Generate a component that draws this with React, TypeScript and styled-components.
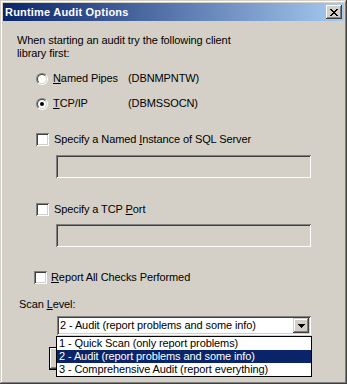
import React from "react";
import styled, { createGlobalStyle } from "styled-components";

const Global = createGlobalStyle`
  html, body { margin: 0; padding: 0; background: #D4D0C8; }
  * { box-sizing: border-box; }
`;

const FONT = `"Liberation Sans", Arial, sans-serif`;

const Window = styled.div`
  position: relative;
  width: 347px;
  height: 384px;
  background: #d4d0c8;
  padding: 3px;
  font-family: ${FONT};
  font-size: 11px;
  letter-spacing: -0.1px;
  color: #000;
  box-shadow: inset -1px -1px #404040, inset 1px 1px #d4d0c8,
    inset -2px -2px #808080, inset 2px 2px #ffffff;
  display: flex;
  flex-direction: column;
`;

const TitleBar = styled.div`
  height: 18px;
  background: linear-gradient(to right, #0a246a, #a6caf0);
  display: flex;
  align-items: center;
  justify-content: space-between;
  padding: 0 2px 0 2px;
`;

const TitleText = styled.span`
  color: #fff;
  font-weight: bold;
  font-size: 11px;
  letter-spacing: 0.2px;
  line-height: 13px;
`;

const CloseButton = styled.div`
  width: 16px;
  height: 14px;
  background: #d4d0c8;
  box-shadow: inset -1px -1px #404040, inset 1px 1px #ffffff,
    inset -2px -2px #808080, inset 2px 2px #d4d0c8;
  display: flex;
  align-items: center;
  justify-content: center;
`;

const Body = styled.div`
  position: relative;
  flex: 1;
  display: flex;
  flex-direction: column;
  padding: 13px 0 0 14px;
`;

const Text = styled.div`
  line-height: 13px;
  white-space: nowrap;
`;

const Row = styled.div<{ $top: number; $left: number }>`
  display: flex;
  align-items: center;
  height: 13px;
  line-height: 13px;
  margin-top: ${(p) => p.$top}px;
  margin-left: ${(p) => p.$left}px;
  white-space: nowrap;
`;

const RadioOuter = styled.span`
  width: 12px;
  height: 12px;
  border-radius: 50%;
  border: 1px solid;
  border-color: #808080 #ffffff #ffffff #808080;
  display: inline-flex;
  flex: none;
`;

const RadioInner = styled.span<{ $on?: boolean }>`
  width: 10px;
  height: 10px;
  border-radius: 50%;
  border: 1px solid;
  border-color: #404040 #d4d0c8 #d4d0c8 #404040;
  background: #fff;
  display: flex;
  align-items: center;
  justify-content: center;
  &::after {
    content: "";
    display: ${(p) => (p.$on ? "block" : "none")};
    width: 4px;
    height: 4px;
    border-radius: 50%;
    background: #000;
  }
`;

const Check = styled.span`
  width: 13px;
  height: 13px;
  flex: none;
  background: #fff;
  box-shadow: inset 1px 1px #808080, inset -1px -1px #ffffff,
    inset 2px 2px #404040, inset -2px -2px #d4d0c8;
`;

const Label = styled.span<{ $gap: number; $width?: number }>`
  margin-left: ${(p) => p.$gap}px;
  ${(p) => (p.$width ? `width: ${p.$width}px;` : "")}
`;

const U = styled.span`
  text-decoration: underline;
  text-underline-offset: 1px;
`;

const Field = styled.div<{ $top: number }>`
  margin-top: ${(p) => p.$top}px;
  margin-left: 39px;
  width: 255px;
  height: 23px;
  background: #d4d0c8;
  box-shadow: inset 1px 1px #808080, inset -1px -1px #ffffff,
    inset 2px 2px #404040, inset -2px -2px #d4d0c8;
`;

const Combo = styled.div`
  margin-top: 5px;
  margin-left: 40px;
  width: 254px;
  height: 19px;
  background: #fff;
  box-shadow: inset 1px 1px #808080, inset -1px -1px #ffffff,
    inset 2px 2px #404040, inset -2px -2px #d4d0c8;
  display: flex;
  align-items: center;
  justify-content: space-between;
  padding: 2px;
`;

const ComboText = styled.span`
  padding-left: 1px;
  line-height: 13px;
  white-space: nowrap;
`;

const ArrowButton = styled.div`
  width: 16px;
  height: 15px;
  background: #d4d0c8;
  box-shadow: inset -1px -1px #404040, inset 1px 1px #d4d0c8,
    inset -2px -2px #808080, inset 2px 2px #ffffff;
  display: flex;
  align-items: center;
  justify-content: center;
`;

const OkButton = styled.div`
  margin-top: 12px;
  margin-left: 32px;
  width: 75px;
  height: 23px;
  border: 1px solid #000;
  background: #d4d0c8;
  box-shadow: inset -1px -1px #404040, inset 1px 1px #ffffff,
    inset -2px -2px #808080;
`;

const List = styled.div`
  position: absolute;
  left: 53px;
  top: 315px;
  width: 256px;
  border: 1px solid #000;
  background: #fff;
  z-index: 2;
`;

const Item = styled.div<{ $sel?: boolean }>`
  height: 13px;
  line-height: 13px;
  padding-left: 2px;
  white-space: nowrap;
  background: ${(p) => (p.$sel ? "#0a246a" : "#fff")};
  color: ${(p) => (p.$sel ? "#fff" : "#000")};
`;

export default function App() {
  return (
    <>
      <Global />
      <Window>
        <TitleBar>
          <TitleText>Runtime Audit Options</TitleText>
          <CloseButton>
            <svg width="8" height="7" viewBox="0 0 8 7" shapeRendering="crispEdges">
              <path d="M0 0h2v1h-2zM6 0h2v1h-2zM1 1h2v1h-2zM5 1h2v1h-2zM2 2h4v1h-4zM3 3h2v1h-2zM2 4h4v1h-4zM1 5h2v1h-2zM5 5h2v1h-2zM0 6h2v1h-2zM6 6h2v1h-2z" fill="#000" />
            </svg>
          </CloseButton>
        </TitleBar>
        <Body>
          <Text>
            When starting an audit try the following client
            <br />
            library first:
          </Text>
          <Row $top={12} $left={19}>
            <RadioOuter>
              <RadioInner />
            </RadioOuter>
            <Label $gap={5} $width={75}>
              <U>N</U>amed Pipes
            </Label>
            <span>(DBNMPNTW)</span>
          </Row>
          <Row $top={12} $left={19}>
            <RadioOuter>
              <RadioInner $on />
            </RadioOuter>
            <Label $gap={5} $width={75}>
              <U>T</U>CP/IP
            </Label>
            <span>(DBMSSOCN)</span>
          </Row>
          <Row $top={23} $left={19}>
            <Check />
            <Label $gap={5}>
              Specify a Named <U>I</U>nstance of SQL Server
            </Label>
          </Row>
          <Field $top={9} />
          <Row $top={25} $left={19}>
            <Check />
            <Label $gap={5}>
              Specify a TCP <U>P</U>ort
            </Label>
          </Row>
          <Field $top={8} />
          <Row $top={24} $left={17}>
            <Check />
            <Label $gap={4}>
              <U>R</U>eport All Checks Performed
            </Label>
          </Row>
          <Row $top={14} $left={2}>
            <span>
              Scan <U>L</U>evel:
            </span>
          </Row>
          <Combo>
            <ComboText>2 - Audit (report problems and some info)</ComboText>
            <ArrowButton>
              <svg width="7" height="4" viewBox="0 0 7 4" shapeRendering="crispEdges">
                <path d="M0 0h7v1h-7zM1 1h5v1h-5zM2 2h3v1h-3zM3 3h1v1h-1z" fill="#000" />
              </svg>
            </ArrowButton>
          </Combo>
          <OkButton />
          <List>
            <Item>1 - Quick Scan (only report problems)</Item>
            <Item $sel>2 - Audit (report problems and some info)</Item>
            <Item>3 - Comprehensive Audit (report everything)</Item>
          </List>
        </Body>
      </Window>
    </>
  );
}
